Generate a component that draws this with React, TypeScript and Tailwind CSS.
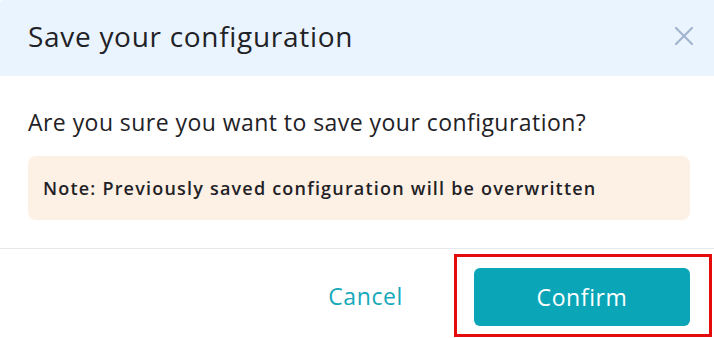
import React from "react";

export default function App() {
  return (
    <div className="w-[714px] h-[338px] bg-white overflow-hidden flex flex-col" style={{ fontFamily: "'Open Sans', 'Liberation Sans', sans-serif" }}>
      <div className="h-[76px] shrink-0 bg-[#eaf4fe] rounded-tl-[3px] flex items-center justify-between pl-[28px] pr-[20px]">
        <h2 className="text-[28px] leading-none tracking-[0.7px] text-[#1f2226] font-normal mt-[-5px]">Save your configuration</h2>
        <svg width="22" height="22" viewBox="0 0 22 22" className="mr-[-1px] mt-[-4px]">
          <path d="M3 3 L19 19 M19 3 L3 19" stroke="#a3b4d0" strokeWidth="2.2" strokeLinecap="round" />
        </svg>
      </div>
      <div className="flex flex-col px-[28px] pt-[32px] pb-[28px] border-b border-[#e6e8ec]">
        <p className="text-[23px] leading-[28px] tracking-[0.45px] text-[#1f2226]">Are you sure you want to save your configuration?</p>
        <div className="mt-[20px] h-[64px] w-[662px] rounded-[8px] bg-[#fdf0e4] flex items-center px-[15px]">
          <span className="text-[18px] font-semibold tracking-[1.2px] text-[#1f2226] mt-[1px]">Note: Previously saved configuration will be overwritten</span>
        </div>
      </div>
      <div className="flex-1 flex items-center justify-end pr-[2px]">
        <button className="text-[23px] tracking-[0.6px] text-[#16a9bb] mr-[51px] mt-[6px]">Cancel</button>
        <div className="border-[3px] border-[#e60b0b] h-[83px] w-[258px] flex items-start justify-center pt-[11px] mt-[4px]">
          <button className="w-[216px] h-[58px] rounded-[6px] bg-[#0aa6b8] text-white text-[23px] tracking-[0.6px] mr-[2px]">Confirm</button>
        </div>
      </div>
    </div>
  );
}
